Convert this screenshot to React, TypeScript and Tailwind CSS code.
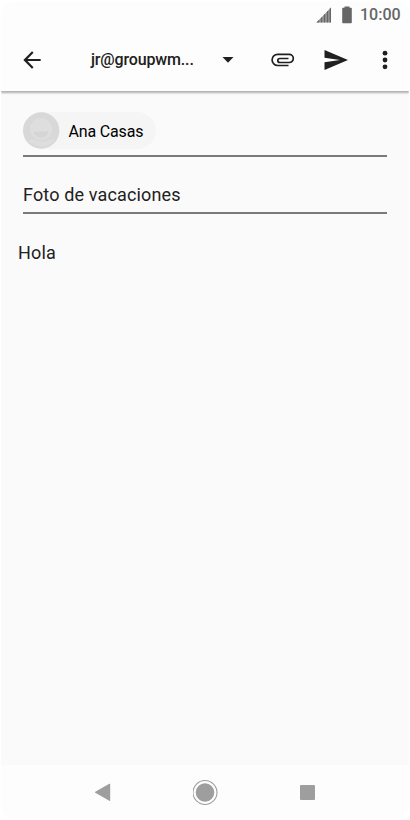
function StatusBar() {
  return (
    <div className="flex h-[27px] shrink-0 items-center justify-end pr-[9px] text-[#666]">
      <svg width="16" height="16" viewBox="0 0 16 16" className="mr-[9px]">
        <path d="M0.5 15.5L15 0.5v15z" fill="#a3a3a3" />
        <path d="M0.5 15.5l2.8-2.9v2.9zM4.7 11.2l1.6-1.7v6H4.7zM7.7 8.1l1.6-1.7v9.1H7.7zM10.7 5l1.6-1.7v12.2h-1.6zM13.5 2.1L15 .5v15h-1.5z" fill="currentColor" />
      </svg>
      <svg width="10" height="18" viewBox="0 0 10 18" className="mr-[8px] ml-px">
        <path d="M2.5 .5h5v1.2H9a.8.8 0 0 1 .8.8v14a.8.8 0 0 1-.8.8H1a.8.8 0 0 1-.8-.8v-14a.8.8 0 0 1 .8-.8h1.5z" fill="currentColor" />
      </svg>
      <span className="w-[40px] whitespace-nowrap text-[16px] leading-[20px] font-medium">10:00</span>
    </div>
  )
}

function Toolbar() {
  return (
    <header className="relative z-10 flex h-[63px] shrink-0 items-center bg-[#fdfdfd] pl-[17.5px] text-[#202020] shadow-[0_2px_2px_rgba(0,0,0,0.3)]">
      <svg width="26" height="26" viewBox="0 0 24 24" fill="currentColor">
        <path d="M20 11H7.83l5.59-5.59L12 4l-8 8 8 8 1.41-1.41L7.83 13H20v-2z" />
      </svg>
      <span className="mt-px ml-[46.5px] w-[131px] text-[16px] leading-[20px] font-medium tracking-[-0.15px]">jr@groupwm...</span>
      <svg width="12" height="6" viewBox="0 0 12 6" fill="currentColor">
        <path d="M.5 0h11L6 5.7z" />
      </svg>
      <svg width="24" height="14" viewBox="0 0 24 14" fill="none" stroke="currentColor" strokeWidth="1.7" className="ml-[37px]">
        <path d="M17.5 12.5H6.7a5.6 5.6 0 0 1 0-11.2h11.500a4.1 4.1 0 0 1 0 8.200H8.800a2 2 0 0 1 0-4h8.700" />
      </svg>
      <svg width="24" height="20" viewBox="0 0 24 20" fill="currentColor" className="ml-[29px]">
        <path d="M.5 0L24 10 .5 20v-7.700L16 10 .5 7.700z" />
      </svg>
      <svg width="6" height="20" viewBox="0 0 6 20" fill="currentColor" className="ml-[33.5px]">
        <circle cx="3" cy="3.2" r="2.4" />
        <circle cx="3" cy="10" r="2.4" />
        <circle cx="3" cy="16.8" r="2.4" />
      </svg>
    </header>
  )
}

function Avatar() {
  return (
    <svg width="37" height="37" viewBox="0 0 37 37">
      <circle cx="18.2" cy="18.5" r="18.2" fill="#d8d8d8" />
      <path d="M5 28.5c3-1.500 5-1.500 7-.5 4 2 9 2 13 0 2-1 4-1 7 .5a18 18 0 0 1-27 0z" fill="#dddddd" />
      <circle cx="18" cy="17" r="11" fill="#dedede" />
      <path d="M10.5 19.5h15a7.6 7.6 0 0 1-15 0z" fill="#d5d5d5" />
    </svg>
  )
}

function NavBar() {
  return (
    <nav className="flex h-[54px] shrink-0 items-center justify-between bg-[#fdfdfd] pr-[94px] pl-[93px] text-[#9e9e9e]">
      <svg width="17" height="18" viewBox="0 0 17 18" fill="currentColor">
        <path d="M15.3 .8a.6.6 0 0 1 .9.5v16a.6.6 0 0 1-.9.5L1.300 9.800a.6.6 0 0 1 0-1z" />
      </svg>
      <svg width="26" height="26" viewBox="0 0 26 26">
        <circle cx="12" cy="13.5" r="12" fill="none" stroke="currentColor" strokeWidth="1.1" />
        <circle cx="12" cy="13.5" r="9.3" fill="currentColor" />
      </svg>
      <span className="mt-px h-[15px] w-[15px] rounded-[1px] bg-[#9e9e9e]" />
    </nav>
  )
}

export default function App() {
  return (
    <div className="h-[820px] w-[410px] overflow-hidden bg-white p-px font-[Roboto,sans-serif]">
      <div className="flex h-full flex-col overflow-hidden rounded-[14px] bg-[#fdfdfd]">
        <StatusBar />
        <Toolbar />
        <main className="flex-1 bg-[#fafafa] pt-[21px] text-[#212121]">
          <div className="mx-[22px] flex h-[45px] items-start border-b-2 border-[#7a7a7a]">
            <div className="flex h-[37px] w-[133px] items-center rounded-full bg-[#f5f5f5] text-black">
              <Avatar />
              <span className="mt-[2px] ml-[8.5px] text-[16px] leading-[20px] tracking-[-0.17px]">Ana Casas</span>
            </div>
          </div>
          <div className="mx-[22px] flex h-[57px] items-end border-b-2 border-[#7a7a7a] pb-[5.5px] text-[18px] leading-[24px] tracking-[0.14px]">
            Foto de vacaciones
          </div>
          <p className="mt-[27px] ml-[17px] text-[18px] leading-[24px] tracking-[0.14px]">Hola</p>
        </main>
        <NavBar />
      </div>
    </div>
  )
}
